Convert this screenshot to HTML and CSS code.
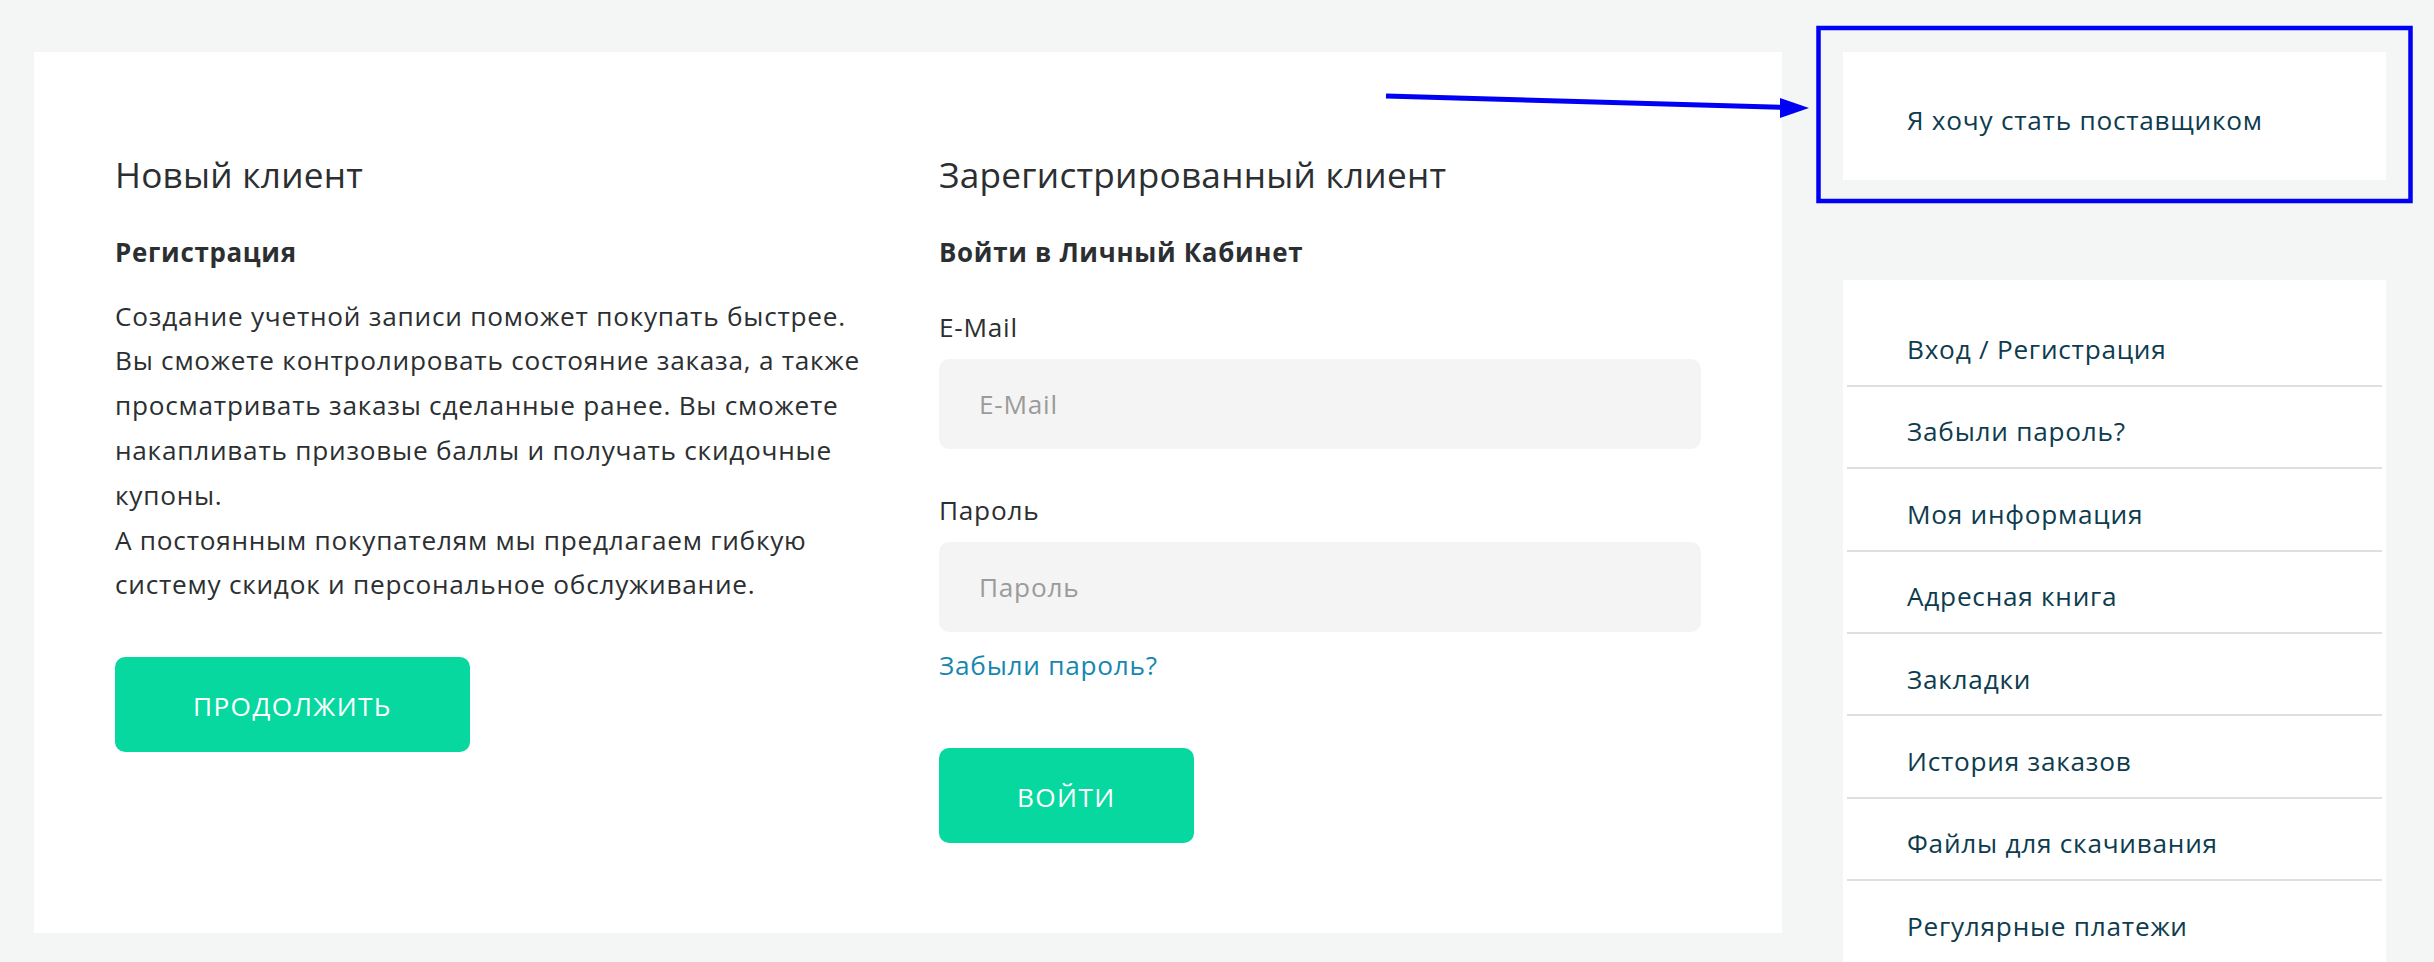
FILE: index.html
```html
<!DOCTYPE html>
<html lang="ru">
<head>
<meta charset="utf-8">
<title>Личный кабинет</title>
<link rel="stylesheet" href="styles.css">
</head>
<body>
<div class="page">
  <main class="panel">
    <section class="col">
      <h2 class="title">Новый клиент</h2>
      <p class="subtitle">Регистрация</p>
      <p class="text">Создание учетной записи поможет покупать быстрее.<br>Вы сможете контролировать состояние заказа, а также<br>просматривать заказы сделанные ранее. Вы сможете<br>накапливать призовые баллы и получать скидочные<br>купоны.<br>А постоянным покупателям мы предлагаем гибкую<br>систему скидок и персональное обслуживание.</p>
      <a class="btn btn-continue" href="#">Продолжить</a>
    </section>
    <section class="col">
      <h2 class="title">Зарегистрированный клиент</h2>
      <p class="subtitle">Войти в Личный Кабинет</p>
      <form class="login">
        <div class="group">
          <label class="label" for="email">E-Mail</label>
          <input class="input" id="email" type="text" placeholder="E-Mail">
        </div>
        <div class="group group-last">
          <label class="label" for="pass">Пароль</label>
          <input class="input" id="pass" type="password" placeholder="Пароль">
          <a class="forgot" href="#">Забыли пароль?</a>
        </div>
        <button class="btn btn-login" type="button">Войти</button>
      </form>
    </section>
  </main>
  <aside class="sidebar">
    <div class="box box-top">
      <a class="item item-plain" href="#">Я хочу стать поставщиком</a>
    </div>
    <nav class="box box-list">
      <a class="item" href="#">Вход / Регистрация</a>
      <a class="item" href="#">Забыли пароль?</a>
      <a class="item" href="#">Моя информация</a>
      <a class="item" href="#">Адресная книга</a>
      <a class="item" href="#">Закладки</a>
      <a class="item" href="#">История заказов</a>
      <a class="item" href="#">Файлы для скачивания</a>
      <a class="item" href="#">Регулярные платежи</a>
    </nav>
  </aside>
</div>
<svg class="annot" width="2434" height="962" viewBox="0 0 2434 962" aria-hidden="true">
  <line x1="1386" y1="96" x2="1784" y2="107.4" stroke="#0000f5" stroke-width="5"/>
  <polygon points="1780,98 1809,108 1780,118" fill="#0000f5"/>
  <rect x="1818.5" y="28" width="592" height="173" fill="none" stroke="#0000f5" stroke-width="4.5"/>
</svg>
</body>
</html>
```

FILE: styles.css
```css
* { box-sizing: border-box; }
html, body { margin: 0; padding: 0; }
body {
  background: #f4f5f5;
  font-family: "Open Sans", "Noto Sans", sans-serif;
  font-size: 26.2px;
  line-height: 44.8px;
  color: #2b2f32;
  position: relative;
}
.page {
  display: flex;
  align-items: flex-start;
  gap: 61px;
  padding: 52px 48px 0 34px;
}
.panel {
  flex: 0 0 1748px;
  background: #fff;
  padding: 101.2px 81px 90px;
  display: grid;
  grid-template-columns: 1fr 1fr;
  column-gap: 62px;
}
.title {
  margin: 0 0 34.2px;
  font-size: 35.2px;
  line-height: 42.24px;
  font-weight: 400;
  letter-spacing: 0.25px;
  color: #2b2f32;
}
.subtitle {
  margin: 0;
  font-size: 25.9px;
  font-weight: 700;
  letter-spacing: 0.7px;
}
.text {
  margin: 19.2px 0 0;
  letter-spacing: 0.75px;
}
.btn {
  display: inline-flex;
  align-items: center;
  justify-content: center;
  height: 95px;
  padding: 4px 78px 0;
  border: 0;
  border-radius: 10px;
  background: #07d8a0;
  color: #fff;
  font-family: inherit;
  font-size: 26.2px;
  line-height: 44.8px;
  letter-spacing: 1.4px;
  text-transform: uppercase;
  text-decoration: none;
  cursor: pointer;
}
.btn-continue { margin-top: 49.7px; }
.login { margin-top: 30.2px; }
.group {
  display: flex;
  flex-direction: column;
  align-items: flex-start;
  margin-bottom: 39px;
}
.group-last { margin-bottom: 0; }
.label {
  margin-bottom: 9.5px;
  letter-spacing: 0.75px;
}
.input {
  width: 100%;
  height: 90px;
  border: 0;
  border-radius: 10px;
  background: #f4f4f4;
  padding: 0 40px;
  font-family: inherit;
  font-size: 26.2px;
  letter-spacing: 0.75px;
  color: #2b2f32;
  outline: none;
}
.input::placeholder { color: #9b9b9b; }
.forgot {
  margin-top: 10.5px;
  color: #1787b0;
  letter-spacing: 0.75px;
  text-decoration: none;
}
.btn-login { margin-top: 60.5px; }
.sidebar {
  flex: 0 0 543px;
  display: flex;
  flex-direction: column;
  gap: 100px;
}
.box {
  background: #fff;
  display: flex;
  flex-direction: column;
}
.box-top { padding: 23px 4px 25px; }
.box-list { padding: 24px 4px 0; }
.item {
  display: block;
  padding: 22.6px 0 13px 60px;
  border-bottom: 2px solid #dde0e3;
  color: #0e3c4e;
  letter-spacing: 0.75px;
  text-decoration: none;
}
.item-plain { border-bottom: 0; }
.annot {
  position: absolute;
  left: 0;
  top: 0;
  pointer-events: none;
}
```
